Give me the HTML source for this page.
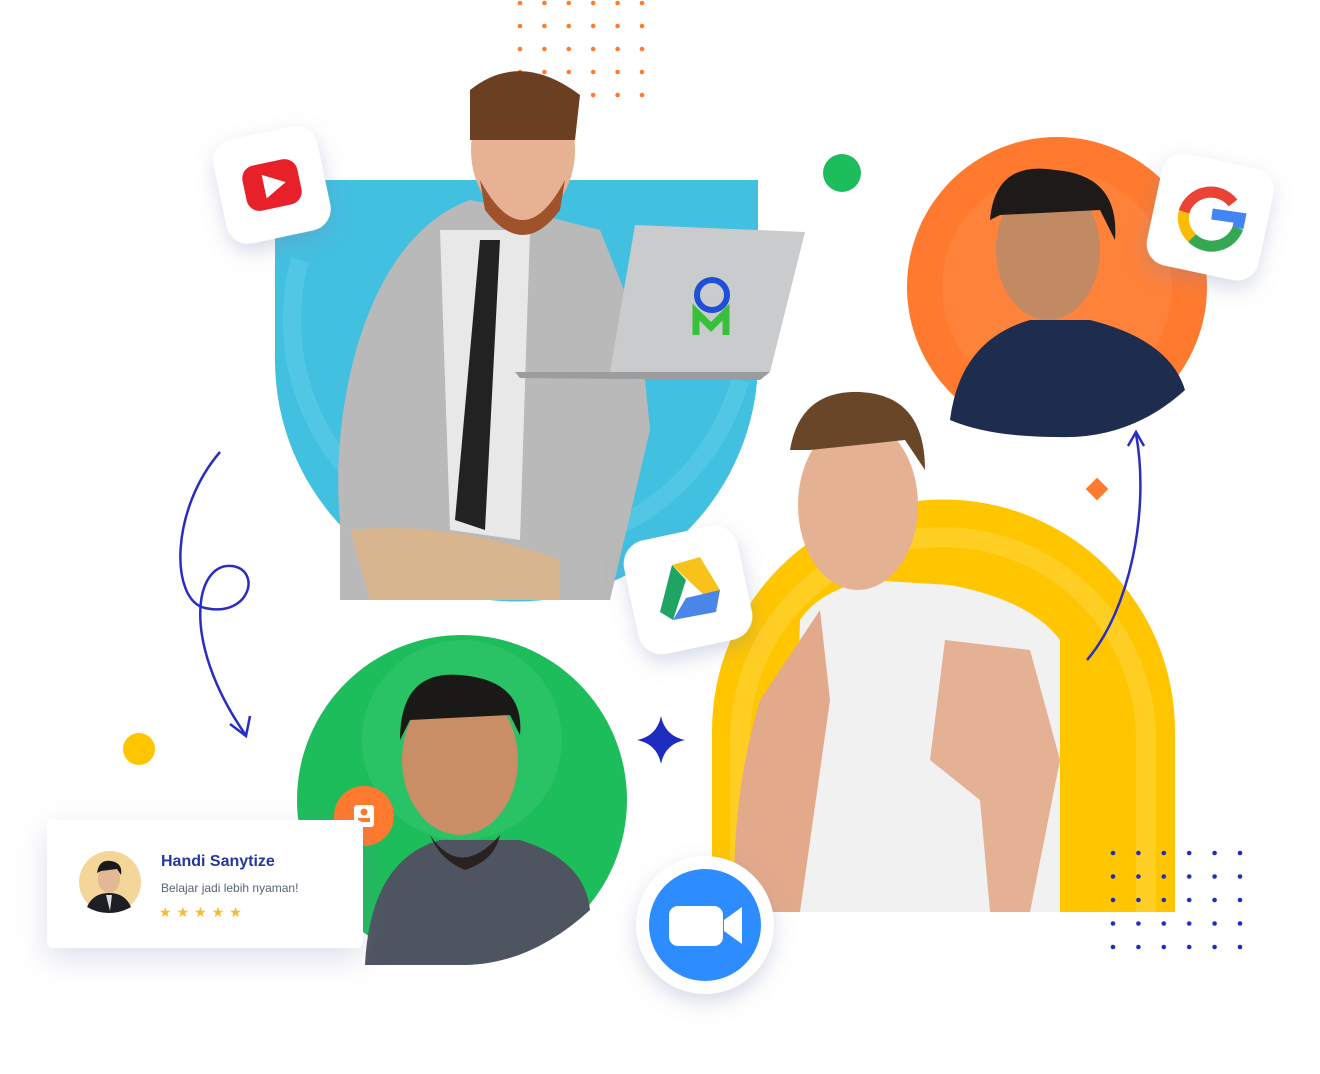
<!DOCTYPE html>
<html><head><meta charset="utf-8"><style>
body{margin:0;width:1320px;height:1074px;background:#fff;overflow:hidden;position:relative;font-family:"Liberation Sans",sans-serif}
svg{position:absolute;left:0;top:0}
.card{position:absolute;left:47px;top:820px;width:316px;height:128px;background:#fff;border-radius:6px;box-shadow:0 10px 30px rgba(120,130,170,.25)}
.name{position:absolute;left:114px;top:33px;font-weight:bold;font-size:16px;color:#23389a}
.sub{position:absolute;left:114px;top:61px;font-size:12px;color:#5a6275}
.stars{position:absolute;left:112px;top:84px;font-size:14px;color:#fbb92b;letter-spacing:5px}
</style></head><body>
<svg width="1320" height="1074" viewBox="0 0 1320 1074">
<defs>
<filter id="sh" x="-30%" y="-30%" width="160%" height="160%"><feDropShadow dx="0" dy="8" stdDeviation="10" flood-color="#7a86b0" flood-opacity=".3"/></filter>
<pattern id="od" x="508" y="-9" width="24.4" height="23" patternUnits="userSpaceOnUse"><circle cx="12" cy="12" r="2.3" fill="#ff7a2e"/></pattern>
<pattern id="bd" x="1101" y="841" width="25.4" height="23.5" patternUnits="userSpaceOnUse"><circle cx="12" cy="12" r="2.3" fill="#1d2bbf"/></pattern>
</defs>
<rect x="508" y="-9" width="146" height="115" fill="url(#od)"/>
<!-- blue shape -->
<path d="M275 180H758V360A241.5 241.5 0 0 1 275 360Z" fill="#42c0e0"/>
<path d="M300 260A215 215 0 0 0 740 380" fill="none" stroke="#5bcbe7" stroke-width="18" opacity=".6"/>
<!-- orange circle -->
<circle cx="1057" cy="287" r="150" fill="#ff7a2e"/>
<circle cx="1057" cy="287" r="115" fill="#ff8a45" opacity=".5"/>
<!-- yellow arch -->
<path d="M712 912V731A231.5 231.5 0 0 1 1175 731V912Z" fill="#ffc600"/>
<path d="M740 912V740A203 203 0 0 1 1146 740V912" fill="none" stroke="#ffd33a" stroke-width="20" opacity=".6"/>
<rect x="1101" y="841" width="152" height="118" fill="url(#bd)"/>
<!-- green circle -->
<circle cx="462" cy="800" r="165" fill="#1ebd5b"/>
<circle cx="462" cy="740" r="100" fill="#33c870" opacity=".5"/>
<!-- man1 -->
<path d="M340 520C330 420 360 240 470 200L520 210 600 230 640 330 650 430 610 600 340 600Z" fill="#b9b9b9"/>
<path d="M440 230L530 230 520 540 450 530Z" fill="#e8e8e8"/>
<path d="M480 240L500 240 485 530 455 520Z" fill="#222"/>
<path d="M350 530Q450 520 560 560L560 600H370Z" fill="#d7b68f"/>
<ellipse cx="523" cy="150" rx="52" ry="70" fill="#e7b293"/>
<path d="M470 90Q520 50 580 95L575 140 470 140Z" fill="#6b3f22"/>
<path d="M480 180Q523 260 565 180L560 210Q523 260 485 210Z" fill="#a0522d"/>
<path d="M635 225L805 232 770 372 610 372Z" fill="#c9cbcd"/>
<path d="M515 372H770L760 380 520 378Z" fill="#9a9c9e"/>
<circle cx="712" cy="295" r="15" fill="none" stroke="#1e4fd6" stroke-width="6"/>
<path d="M696 335V312L711 327 726 312V335" fill="none" stroke="#37c13b" stroke-width="7"/>
<!-- man orange -->
<path d="M950 420Q960 340 1030 320L1090 320Q1170 340 1185 390 1130 440 1057 437 990 437 950 420Z" fill="#1e2c4e"/>
<ellipse cx="1048" cy="250" rx="52" ry="70" fill="#c18a63"/>
<path d="M990 220Q995 160 1055 170 1120 175 1115 240L1100 210 1000 215Z" fill="#1d1a18"/>
<!-- man green -->
<path d="M365 965Q370 860 440 840L520 840Q585 860 590 910 530 965 462 965Z" fill="#4e5560"/>
<ellipse cx="460" cy="760" rx="58" ry="75" fill="#c98e66"/>
<path d="M400 740Q400 670 460 675 525 680 520 735L510 715 410 720Z" fill="#1b1818"/>
<path d="M430 835Q460 880 500 835 495 860 465 870 440 860 430 835Z" fill="#2a2220"/>
<!-- man yellow -->
<path d="M790 912L800 620Q820 590 870 580L950 585Q1030 600 1060 640L1060 912Z" fill="#f1f1f1"/>
<path d="M735 912Q730 800 760 700L820 610 830 700 800 912Z" fill="#e2aa8a"/>
<path d="M1030 912L1060 760 1030 650 945 640 930 760 980 800 990 912Z" fill="#e2aa8a" opacity=".9"/>
<ellipse cx="858" cy="505" rx="60" ry="85" fill="#e4b192"/>
<path d="M790 450Q800 390 860 392 925 395 925 470L905 440 810 450Z" fill="#6a4628"/>
<circle cx="364" cy="816" r="30" fill="#ff7a2e"/>
<rect x="354" y="805" width="20" height="22" rx="3" fill="#fff"/>
<circle cx="364" cy="812" r="3.5" fill="#ff7a2e"/>
<rect x="358" y="818" width="12" height="4" fill="#ff7a2e"/>
<!-- youtube tile -->
<g transform="rotate(-12 272 185)" filter="url(#sh)"><rect x="219" y="132" width="106" height="106" rx="22" fill="#fff"/></g>
<g transform="rotate(-12 272 185)"><rect x="244" y="162" width="56" height="46" rx="13" fill="#e8202a"/><path d="M264 173L286 185 264 197Z" fill="#fff"/></g>
<!-- google tile -->
<g transform="rotate(12 1210 218)" filter="url(#sh)"><rect x="1153" y="160" width="114" height="114" rx="22" fill="#fff"/></g>
<g fill="none" stroke-width="11">
<path d="M1233 203A28 28 0 0 0 1184 212" stroke="#ea4335"/>
<path d="M1184 212A28 28 0 0 0 1192 238" stroke="#fbbc05"/>
<path d="M1192 238A28 28 0 0 0 1238 228" stroke="#34a853"/>
<path d="M1238 228L1240 218 1212 214" stroke="#4285f4"/>
</g>
<!-- drive tile -->
<g transform="rotate(-12 688 590)" filter="url(#sh)"><rect x="630" y="532" width="116" height="116" rx="24" fill="#fff"/></g>
<path d="M672 565L700 557 720 590 706 597Z" fill="#f8c21a"/>
<path d="M672 565L660 612 673 620 686 580Z" fill="#1fa463"/>
<path d="M673 620L716 612 720 590 686 598Z" fill="#4a86e8"/>
<!-- zoom -->
<circle cx="705" cy="925" r="69" fill="#fff" filter="url(#sh)"/>
<circle cx="705" cy="925" r="56" fill="#2d8cff"/>
<rect x="669" y="906" width="54" height="40" rx="9" fill="#fff"/>
<path d="M724 920L742 907V944L724 931Z" fill="#fff"/>
<!-- decorations -->
<circle cx="842" cy="173" r="19" fill="#1ebd5b"/>
<circle cx="139" cy="749" r="16" fill="#ffc600"/>
<rect x="1089" y="481" width="16" height="16" fill="#ff7a2e" transform="rotate(45 1097 489)"/>
<path d="M661 716Q665 736 685 740 665 744 661 764 657 744 637 740 657 736 661 716Z" fill="#1d2bbf"/>
<path d="M220 452C170 510 170 600 205 608 250 618 262 570 232 566 195 562 180 640 245 734" fill="none" stroke="#2a2dc2" stroke-width="2.5"/>
<path d="M230 724L246 736 250 716" fill="none" stroke="#2a2dc2" stroke-width="2.5"/>
<path d="M1087 660C1130 610 1150 510 1136 434" fill="none" stroke="#2a2dc2" stroke-width="2.5"/>
<path d="M1128 446L1136 432 1144 446" fill="none" stroke="#2a2dc2" stroke-width="2.5"/>
</svg>
<div class="card">
<svg width="62" height="62" style="left:32px;top:31px"><circle cx="31" cy="31" r="31" fill="#f4d59a"/><ellipse cx="30" cy="28" rx="11" ry="14" fill="#e3b894"/><path d="M18 22Q20 8 32 10 44 12 42 24L38 18 22 20Z" fill="#1a1a1a"/><path d="M8 56Q14 42 30 42 46 42 52 56 42 62 30 62 18 62 8 56Z" fill="#1d1f24"/><path d="M27 44L33 44 31 60Z" fill="#ddd"/></svg>
<div class="name">Handi Sanytize</div>
<div class="sub">Belajar jadi lebih nyaman!</div>
<div class="stars">★★★★★</div>
</div>
</body></html>
